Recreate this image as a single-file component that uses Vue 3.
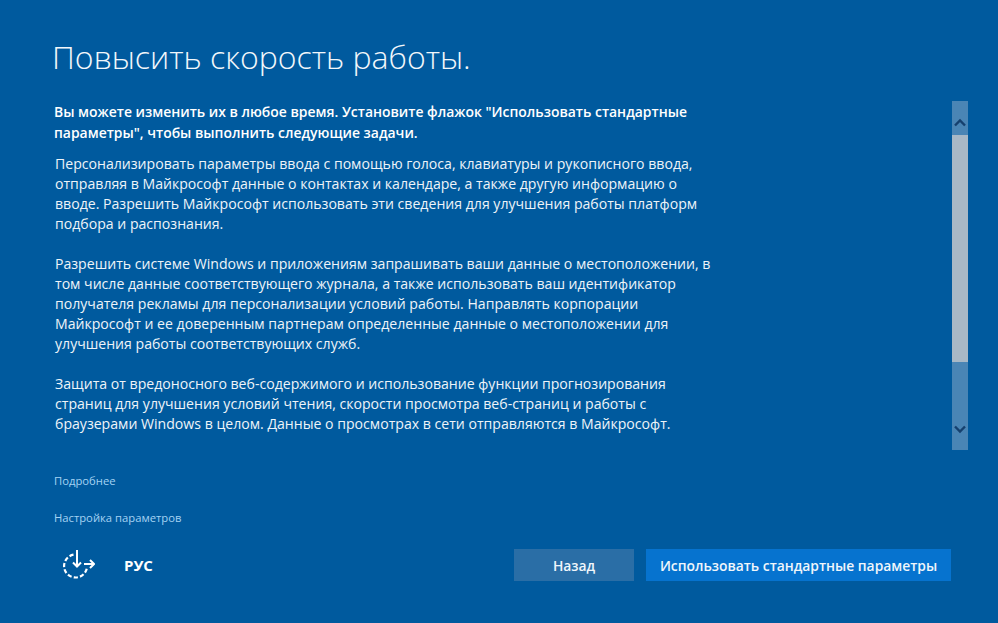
<script setup>
const intro = ['Вы можете изменить их в любое время. Установите флажок "Использовать стандартные', 'параметры", чтобы выполнить следующие задачи.']
const paragraphs = [
  ['Персонализировать параметры ввода с помощью голоса, клавиатуры и рукописного ввода,', 'отправляя в Майкрософт данные о контактах и календаре, а также другую информацию о', 'вводе. Разрешить Майкрософт использовать эти сведения для улучшения работы платформ', 'подбора и распознания.'],
  ['Разрешить системе Windows и приложениям запрашивать ваши данные о местоположении, в', 'том числе данные соответствующего журнала, а также использовать ваш идентификатор', 'получателя рекламы для персонализации условий работы. Направлять корпорации', 'Майкрософт и ее доверенным партнерам определенные данные о местоположении для', 'улучшения работы соответствующих служб.'],
  ['Защита от вредоносного веб-содержимого и использование функции прогнозирования', 'страниц для улучшения условий чтения, скорости просмотра веб-страниц и работы с', 'браузерами Windows в целом. Данные о просмотрах в сети отправляются в Майкрософт.']
]
</script>

<template>
  <main class="page">
    <h1 class="title">Повысить скорость работы.</h1>
    <section class="content">
      <div class="text">
        <p class="intro"><span v-for="l in intro" :key="l" class="line">{{ l }}</span></p>
        <p v-for="(p, i) in paragraphs" :key="i" class="para"><span v-for="l in p" :key="l" class="line">{{ l }}</span></p>
      </div>
      <div class="scrollbar">
        <div class="arrow up">
          <svg width="12" height="9" viewBox="0 0 12 9"><path d="M1 7.5 L6 2.5 L11 7.5" fill="none" stroke="#15406e" stroke-width="2.4"/></svg>
        </div>
        <div class="thumb"></div>
        <div class="track"></div>
        <div class="arrow down">
          <svg width="12" height="9" viewBox="0 0 12 9"><path d="M1 1.5 L6 6.5 L11 1.5" fill="none" stroke="#15406e" stroke-width="2.4"/></svg>
        </div>
      </div>
    </section>
    <nav class="links">
      <a class="link">Подробнее</a>
      <a class="link">Настройка параметров</a>
    </nav>
    <footer class="footer">
      <div class="tray">
        <svg class="access" width="34" height="32" viewBox="0 0 34 32">
          <path d="M12.5 5.7 A11.5 11.5 0 1 0 25.8 19.5" fill="none" stroke="#fff" stroke-width="2.2" stroke-dasharray="4.2 2.2"/>
          <path d="M16 1 V17.5 M12 13.5 L16 17.5 L20 13.5" fill="none" stroke="#fff" stroke-width="2"/>
          <path d="M23 15 H33 M29 11 L33 15 L29 19" fill="none" stroke="#fff" stroke-width="2"/>
        </svg>
        <span class="lang">РУС</span>
      </div>
      <div class="buttons">
        <button class="btn back">Назад</button>
        <button class="btn primary">Использовать стандартные параметры</button>
      </div>
    </footer>
  </main>
</template>

<style>
html, body { margin: 0; background: #005a9e; }
</style>

<style scoped>
.page {
  width: 998px;
  height: 623px;
  box-sizing: border-box;
  background: #005a9e;
  color: #fff;
  font-family: "Open Sans", "Noto Sans", sans-serif;
  padding: 36px 30px 0 54px;
  display: flex;
  flex-direction: column;
  overflow: hidden;
}
.title {
  margin: 0 0 0 -2px;
  font-size: 32px;
  font-weight: 300;
  line-height: 42px;
  color: #f2f7fb;
}
.content {
  display: flex;
  justify-content: space-between;
  margin-top: 23px;
  height: 349px;
}
.text { font-size: 14.1px; line-height: 20px; }
.line { display: block; white-space: nowrap; }
.intro { margin: 0 0 11px; font-weight: 600; line-height: 21px; font-size: 13.93px; }
.para { margin: 0 0 20px 1px; color: #eef4f9; }
.scrollbar {
  width: 16px;
  display: flex;
  flex-direction: column;
  background: #4a85b5;
}
.arrow { display: flex; justify-content: center; box-sizing: border-box; }
.up { height: 34px; padding-top: 17px; }
.down { height: 40px; padding-top: 15px; }
.thumb { height: 227px; background: #a8b8c6; }
.track { flex: 1; }
.links {
  display: flex;
  flex-direction: column;
  gap: 22px;
  margin-top: 23px;
}
.link { font-size: 11.25px; line-height: 15px; color: #a5d3f3; }
.footer {
  display: flex;
  justify-content: space-between;
  align-items: center;
  margin-top: 24px;
  margin-right: 17px;
}
.tray { display: flex; align-items: center; gap: 29px; padding-left: 7px; }
.access { display: block; }
.lang { font-size: 15px; font-weight: 700; }
.buttons { display: flex; gap: 12px; }
.btn {
  height: 32px;
  border: 0;
  padding: 0;
  color: #f0f6fb;
  font-family: inherit;
  font-size: 13.85px;
  font-weight: 600;
}
.back { width: 120px; background: #2a6ea6; }
.primary { width: 305px; background: #0673cf; }
</style>
